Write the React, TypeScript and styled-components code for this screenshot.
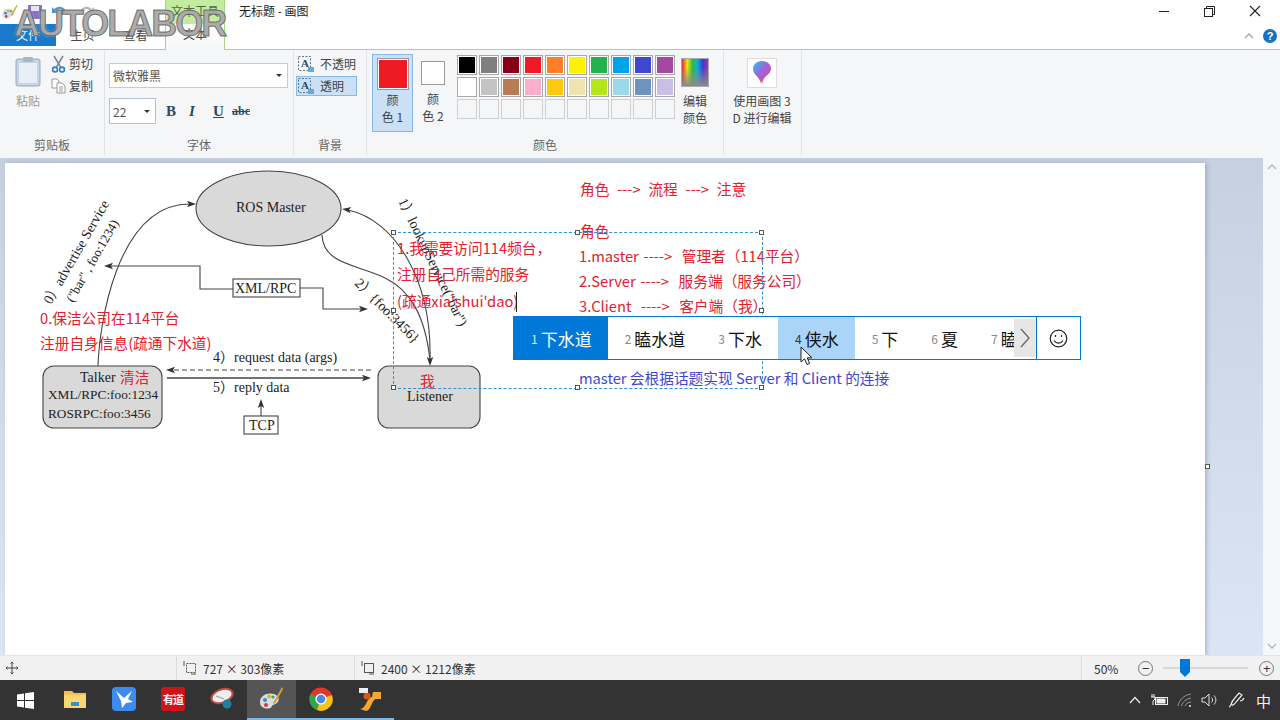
import styled, { createGlobalStyle } from 'styled-components';

const CJK = `'Noto Sans CJK SC', 'Noto Sans', sans-serif`;
const SERIF = `'Liberation Serif', 'Noto Sans CJK SC', serif`;

const GlobalStyle = createGlobalStyle`
  html, body { margin: 0; padding: 0; overflow: hidden; }
  body { font-family: ${CJK}; background: #f5f6f7; }
`;

const Window = styled.div`
  width: 1280px;
  height: 720px;
  display: flex;
  flex-direction: column;
  overflow: hidden;
  position: relative;
`;

/* ---------- title + tabs ---------- */
const TopBar = styled.header`
  height: 50px;
  flex: none;
  background: #fff;
  border-bottom: 1px solid #a6d97f;
  box-sizing: border-box;
  display: flex;
  position: relative;
`;

const TabColumn = styled.div`
  display: flex;
  flex-direction: column;
  justify-content: flex-end;
  height: 50px;
`;

const QuickIcons = styled.div`
  height: 24px;
  display: flex;
  align-items: center;
  gap: 10px;
  padding-left: 1px;
`;

const TabRow = styled.div`
  display: flex;
  height: 26px;
`;

const FileTab = styled.div`
  width: 56px;
  height: 22px;
  background: #1979ca;
  color: #e9f3fb;
  font-size: 12px;
  line-height: 22px;
  text-align: center;
`;

const Tab = styled.div`
  width: 53px;
  height: 22px;
  line-height: 22px;
  font-size: 12px;
  text-align: center;
  color: #444;
`;

const ToolTabs = styled.div`
  width: 60px;
  height: 50px;
  margin-left: 3px;
  flex: none;
  display: flex;
  flex-direction: column;
  border-left: 1px solid #a6d97f;
  border-right: 1px solid #a6d97f;
  box-sizing: border-box;
`;

const ToolTitle = styled.div`
  height: 24px;
  background: #c5eb9e;
  color: #4a6a3a;
  font-size: 12px;
  line-height: 22px;
  text-align: center;
`;

const ToolTab = styled.div`
  height: 26px;
  background: linear-gradient(#ffffff, #f5f6f7);
  margin-bottom: -1px;
  font-size: 12px;
  line-height: 20px;
  text-align: center;
  color: #444;
`;

const WindowTitle = styled.div`
  margin-left: 14px;
  font-size: 12px;
  line-height: 22px;
  color: #222;
`;

const WindowButtons = styled.div`
  margin-left: auto;
  display: flex;
  flex-direction: column;
  align-items: flex-end;
  padding-right: 3px;
`;

const ControlRow = styled.div`
  display: flex;
  align-items: center;
  gap: 34px;
  height: 22px;
  padding-right: 16px;
`;

const HelpRow = styled.div`
  display: flex;
  align-items: center;
  gap: 9px;
  height: 26px;
  margin-top: 1px;
`;

const HelpIcon = styled.div`
  width: 14px;
  height: 14px;
  border-radius: 50%;
  background: #1572c4;
  color: #fff;
  font: bold 11px/14px 'Liberation Sans', sans-serif;
  text-align: center;
`;

const Watermark = styled.div`
  position: absolute;
  left: 14px;
  top: 5px;
  font: bold 36px/38px 'Liberation Sans', sans-serif;
  color: rgba(150, 150, 150, 0.78);
  -webkit-text-stroke: 1px rgba(70, 70, 70, 0.7);
  text-shadow: 0 0 2px rgba(255, 255, 255, 0.9);
  letter-spacing: -2px;
  z-index: 5;
`;

/* ---------- ribbon ---------- */
const Ribbon = styled.section`
  height: 105px;
  flex: none;
  background: #f5f6f7;
  display: flex;
  box-sizing: border-box;
  color: #444;
  font-size: 12px;
`;

const Group = styled.div<{ $w: number }>`
  width: ${p => p.$w}px;
  flex: none;
  box-sizing: border-box;
  border-right: 1px solid #e2e3e4;
  display: flex;
  flex-direction: column;
  height: 105px;
`;

const GroupBody = styled.div`
  flex: 1;
  display: flex;
  min-height: 0;
`;

const GroupLabel = styled.div`
  height: 20px;
  text-align: center;
  font-size: 12px;
  line-height: 20px;
  color: #666;
`;

const PasteButton = styled.div`
  width: 44px;
  margin: 6px 0 0 6px;
  display: flex;
  flex-direction: column;
  align-items: center;
  gap: 5px;
  color: #999;
`;

const SmallStack = styled.div`
  display: flex;
  flex-direction: column;
  gap: 4px;
  margin: 5px 0 0 1px;
`;

const SmallItem = styled.div<{ $active?: boolean }>`
  display: flex;
  align-items: center;
  gap: 3px;
  height: 18px;
  line-height: 18px;
  ${p => p.$active && 'background: #c9e0f7; outline: 1px solid #86b8e8;'}
`;

const BackgroundStack = styled(SmallStack)`
  margin-left: 3px;
`;

const FontColumn = styled.div`
  display: flex;
  flex-direction: column;
  padding: 13px 0 0 4px;
  gap: 10px;
`;

const FontSelect = styled.div`
  width: 179px;
  height: 25px;
  box-sizing: border-box;
  background: #fff;
  border: 1px solid #c4cdd6;
  font-size: 12px;
  line-height: 23px;
  padding: 0 3px;
  color: #555;
  display: flex;
  justify-content: space-between;
  align-items: center;
`;

const Caret = styled.span`
  width: 0;
  height: 0;
  border-left: 3px solid transparent;
  border-right: 3px solid transparent;
  border-top: 3px solid #333;
  margin-right: 2px;
`;

const FontTools = styled.div`
  display: flex;
  align-items: center;
`;

const SizeSelect = styled(FontSelect)`
  width: 47px;
  height: 26px;
  margin-right: 10px;
  border-color: #b8c2cc;
`;

const FormatButton = styled.span<{ $w: number; $style?: string }>`
  width: ${p => p.$w}px;
  font-family: 'Liberation Serif', serif;
  font-size: 15px;
  font-weight: bold;
  color: #2e4a62;
  ${p => p.$style}
`;

const SwatchBig = styled.div`
  width: 41px;
  height: 78px;
  margin: 4px 0 0 5px;
  box-sizing: border-box;
  background: #c9e0f7;
  border: 1px solid #86b8e8;
  display: flex;
  flex-direction: column;
  align-items: center;
  padding-top: 3px;
  line-height: 17px;
  text-align: center;
`;

const SwatchPlain = styled(SwatchBig)`
  width: 30px;
  margin-left: 5px;
  background: transparent;
  border-color: transparent;
  padding-top: 6px;
`;

const ColorChip = styled.div<{ $size: number; $c: string; $mb: number }>`
  width: ${p => p.$size}px;
  height: ${p => p.$size}px;
  flex: none;
  box-sizing: border-box;
  background: ${p => p.$c};
  border: 1px solid #9a9a9a;
  box-shadow: inset 0 0 0 1px #fff;
  margin-bottom: ${p => p.$mb}px;
`;

const Palette = styled.div`
  display: grid;
  grid-template-columns: repeat(10, 20px);
  grid-auto-rows: 20px;
  gap: 2px;
  margin: 5px 0 0 9px;
`;

const PaletteCell = styled.div<{ $c: string | null }>`
  box-sizing: border-box;
  border: 1px solid ${p => (p.$c ? '#a9a9a9' : '#cfcfcf')};
  background: ${p => p.$c ?? 'transparent'};
  box-shadow: ${p => (p.$c ? 'inset 0 0 0 1px #fff' : 'none')};
`;

const BigAction = styled.div<{ $w: number; $ml: number }>`
  width: ${p => p.$w}px;
  margin: 8px 0 0 ${p => p.$ml}px;
  display: flex;
  flex-direction: column;
  align-items: center;
  text-align: center;
  line-height: 17px;
`;

const RainbowIcon = styled.div`
  width: 28px;
  height: 29px;
  box-sizing: border-box;
  border: 1px solid #aaa;
  background:
    linear-gradient(to bottom, transparent 30%, #8a8a8a 100%),
    linear-gradient(to right, #e2262a, #f3e50e, #25c23a, #12a8e0, #3240d0, #b52cb0);
  margin-bottom: 5px;
`;

const Paint3DIcon = styled.div`
  width: 30px;
  height: 30px;
  box-sizing: border-box;
  background: #fff;
  border: 1px solid #ddd;
  display: flex;
  align-items: center;
  justify-content: center;
  margin-bottom: 4px;
`;

/* ---------- workspace ---------- */
const Workspace = styled.main`
  flex: 1;
  display: flex;
  min-height: 0;
  padding-top: 3px;
  background: #f5f6f7;
`;

const CanvasArea = styled.div`
  width: 1263px;
  flex: none;
  background: linear-gradient(#c6d0df, #dbe5f3);
  padding: 5px 0 0 5px;
  box-sizing: border-box;
  position: relative;
  overflow: hidden;
`;

const Sheet = styled.div`
  width: 1200px;
  height: 700px;
  background: #fff;
  position: relative;
  box-shadow: 2px 0 4px rgba(100, 115, 140, 0.35);
`;

const Scrollbar = styled.div`
  flex: 1;
  display: flex;
  flex-direction: column;
  justify-content: space-between;
  align-items: center;
  padding: 6px 0;
`;

const Diagram = styled.svg`
  position: absolute;
  left: 0;
  top: 0;
`;

const Note = styled.div<{ $x: number; $y: number; $c?: string; $ws?: number }>`
  position: absolute;
  left: ${p => p.$x - 5}px;
  top: ${p => p.$y - 163}px;
  font-size: 14.7px;
  line-height: 20px;
  white-space: pre;
  word-spacing: ${p => p.$ws ?? 0}px;
  color: ${p => p.$c ?? '#e0222e'};
`;

const SelectBox = styled.div`
  position: absolute;
  left: 388px;
  top: 69px;
  width: 370px;
  height: 157px;
  border: 1px dashed #2f8fd0;
  box-sizing: border-box;
`;

const Handle = styled.span<{ $x: number; $y: number }>`
  position: absolute;
  left: ${p => p.$x * 100}%;
  top: ${p => p.$y * 100}%;
  width: 5px;
  height: 5px;
  margin: -3px 0 0 -3px;
  background: #fff;
  border: 1px solid #555;
  box-sizing: border-box;
`;

const SheetHandle = styled.span`
  position: absolute;
  left: 1200px;
  top: 301px;
  width: 5px;
  height: 5px;
  background: #fff;
  border: 1px solid #555;
  box-sizing: border-box;
`;

const TextCaret = styled.span`
  position: absolute;
  left: 511px;
  top: 129px;
  width: 1px;
  height: 20px;
  background: #222;
`;

/* ---------- IME candidates ---------- */
const ImeBar = styled.div`
  position: absolute;
  left: 508px;
  top: 153px;
  width: 568px;
  height: 44px;
  box-sizing: border-box;
  background: #fff;
  border: 1px solid #0078d7;
  display: flex;
  z-index: 3;
`;

const Candidates = styled.div`
  width: 522px;
  flex: none;
  display: flex;
  overflow: hidden;
  position: relative;
`;

const Candidate = styled.div<{ $state?: 'selected' | 'hover' }>`
  flex: none;
  display: flex;
  align-items: center;
  gap: 3px;
  height: 100%;
  padding: 0 16px 0 17px;
  box-sizing: border-box;
  font-size: 17px;
  color: ${p => (p.$state === 'selected' ? '#fff' : '#111')};
  background: ${p =>
    p.$state === 'selected' ? '#0078d7' : p.$state === 'hover' ? '#abd5f8' : 'transparent'};
`;

const CandidateNum = styled.span<{ $state?: 'selected' | 'hover' }>`
  font-size: 12px;
  color: ${p => (p.$state === 'selected' ? '#d7ebfa' : p.$state === 'hover' ? '#333' : '#888')};
`;

const NextPage = styled.div`
  position: absolute;
  right: 0;
  top: 2px;
  width: 22px;
  height: 38px;
  background: #e6e6e6;
  display: flex;
  align-items: center;
  justify-content: center;
`;

const Emoji = styled.div`
  flex: 1;
  border-left: 1px solid #0078d7;
  display: flex;
  align-items: center;
  justify-content: center;
`;

const Pointer = styled.svg`
  position: absolute;
  left: 795px;
  top: 183px;
  z-index: 6;
`;

/* ---------- status + taskbar ---------- */
const StatusBar = styled.footer`
  height: 25px;
  flex: none;
  background: #f1f1f1;
  border-top: 1px solid #e3e3e3;
  box-sizing: border-box;
  display: flex;
  align-items: center;
  font-size: 12px;
  color: #333;
`;

const StatusCell = styled.div<{ $w: number }>`
  width: ${p => p.$w}px;
  height: 100%;
  flex: none;
  box-sizing: border-box;
  border-right: 1px solid #dcdcdc;
  display: flex;
  align-items: center;
  gap: 6px;
  padding-left: 6px;
`;

const ZoomCluster = styled.div`
  display: flex;
  align-items: center;
  margin-left: 12px;
`;

const ZoomPercent = styled.span`
  margin-right: 20px;
`;

const ZoomButton = styled.div`
  width: 15px;
  height: 15px;
  border: 1px solid #777;
  border-radius: 50%;
  box-sizing: border-box;
  display: flex;
  align-items: center;
  justify-content: center;
  font: 13px/13px 'Liberation Sans', sans-serif;
  color: #333;
`;

const ZoomTrack = styled.div`
  width: 85px;
  height: 2px;
  background: #d8d8d8;
  margin: 0 11px 0 10px;
  position: relative;
`;

const ZoomThumb = styled.svg`
  position: absolute;
  left: 16px;
  top: -8px;
`;

const Taskbar = styled.nav`
  height: 40px;
  flex: none;
  background: #333333;
  display: flex;
  align-items: stretch;
`;

const TaskStart = styled.div`
  width: 50px;
  display: flex;
  align-items: center;
  justify-content: center;
`;

const TaskItem = styled.div<{ $active?: boolean; $open?: boolean }>`
  width: 49.2px;
  flex: none;
  display: flex;
  align-items: center;
  justify-content: center;
  box-sizing: border-box;
  background: ${p => (p.$active ? '#555' : 'transparent')};
  border-bottom: 2px solid ${p => (p.$open ? '#76b9ed' : 'transparent')};
`;

const YoudaoTile = styled.div`
  width: 24px;
  height: 24px;
  border-radius: 3px;
  background: #d0121b;
  color: #fff;
  font-size: 11px;
  font-weight: bold;
  line-height: 24px;
  text-align: center;
  letter-spacing: -1px;
`;

const Tray = styled.div`
  margin-left: auto;
  display: flex;
  align-items: center;
  gap: 9px;
  padding-right: 9px;
  color: #f2f2f2;
`;

const PenIcon = styled.svg`
  margin-left: 1px;
`;

const ImeLabel = styled.span`
  font-size: 15px;
  margin-left: 1px;
`;

const palette: (string | null)[] = [
  '#000000', '#7f7f7f', '#880015', '#ed1c24', '#ff7f27', '#fff200', '#22b14c', '#00a2e8', '#3f48cc', '#a349a4',
  '#ffffff', '#c3c3c3', '#b97a57', '#ffaec9', '#ffc90e', '#efe4b0', '#b5e61d', '#99d9ea', '#7092be', '#c8bfe7',
  null, null, null, null, null, null, null, null, null, null,
];

const candidates = ['下水道', '瞌水道', '下水', '侠水', '下', '夏', '瞌睡'];

const handles: [number, number][] = [
  [0, 0], [0.5, 0], [1, 0], [0, 0.5], [1, 0.5], [0, 1], [0.5, 1], [1, 1],
];

function WinLogo() {
  return (
    <svg width="17" height="17" viewBox="0 0 17 17" fill="#fff">
      <path d="M0 2.4 7 1.4V8H0zM8 1.3 17 0V8H8zM0 9H7V15.6L0 14.6zM8 9H17V17L8 15.7z" />
    </svg>
  );
}

function PaintPalette({ size }: { size: number }) {
  return (
    <svg width={size} height={size} viewBox="0 0 26 26">
      <path d="M2 16C2 9 10 6 16 8c5 2 6 6 3 9-2 2-4 1-5 3-1 3-5 3-8 2-3-1-4-3-4-6z" fill="#d8dde0" />
      <circle cx="7" cy="14" r="2" fill="#2e8bd6" />
      <circle cx="11" cy="10.5" r="2" fill="#e4b21e" />
      <circle cx="8" cy="19" r="2" fill="#d63a3a" />
      <circle cx="15" cy="11" r="1.6" fill="#3aa655" />
      <path d="M24 1 15 17l2 1L25 3z" fill="#d4a23a" />
    </svg>
  );
}

function Arrow({ x, y, angle }: { x: number; y: number; angle: number }) {
  return <path d="M0 0-9-3.2-7 0-9 3.2z" fill="#333" transform={`translate(${x} ${y}) rotate(${angle})`} />;
}

function RosDiagram() {
  const label = { fontFamily: SERIF, fontSize: 14, fill: '#222' };
  return (
    <Diagram width="600" height="300" viewBox="5 163 600 300">
      <g fill="none" stroke="#444" strokeWidth="1.1">
        <ellipse cx="268.5" cy="208.5" rx="72.5" ry="37.5" fill="#d9d9d9" />
        <rect x="43" y="366" width="119" height="62" rx="11" fill="#d9d9d9" />
        <rect x="378" y="366" width="102" height="62" rx="11" fill="#d9d9d9" />
        <rect x="233" y="279" width="67" height="18" fill="#fff" />
        <rect x="244" y="416" width="34" height="18" fill="#fff" />
        <path d="M98 366C99 330 115 204 190 204" />
        <path d="M348 210C395 220 432 280 430 360" />
        <path d="M322 235C323 265 360 265 385 278 410 290 425 315 430 360" />
        <path d="M233 289H200V266H110" />
        <path d="M300 288H323V309H362" />
        <path d="M371 370H172" strokeDasharray="5 3" />
        <path d="M167 378H365" strokeWidth="1.4" />
        <path d="M261 416V404" />
      </g>
      <Arrow x={196} y={204} angle={0} />
      <Arrow x={342} y={209} angle={187} />
      <Arrow x={430} y={366} angle={90} />
      <Arrow x={104} y={266} angle={180} />
      <Arrow x={368} y={309} angle={0} />
      <Arrow x={166} y={370} angle={180} />
      <Arrow x={371} y={378} angle={0} />
      <Arrow x={261} y={399} angle={-90} />
      <text {...label} x="236" y="212">ROS Master</text>
      <text {...label} x="235" y="293">XML/RPC</text>
      <text {...label} x="80" y="382">Talker</text>
      <text {...label} fontSize="13.3" x="48" y="399">XML/RPC:foo:1234</text>
      <text {...label} fontSize="13.3" x="48" y="418">ROSRPC:foo:3456</text>
      <text {...label} x="407" y="401">Listener</text>
      <text {...label} x="249" y="430">TCP</text>
      <text {...label} x="213" y="362">4）request data (args)</text>
      <text {...label} x="213" y="392">5）reply data</text>
      <text {...label} transform="translate(51 305) rotate(-60)">0）advertise Service</text>
      <text {...label} fontSize="13" transform="translate(73 303) rotate(-60)">("bar" , foo:1234)</text>
      <text {...label} transform="translate(398 201) rotate(64)">1）lookupService("bar")</text>
      <text {...label} transform="translate(354 284) rotate(45)">2）{'{foo:3456}'}</text>
    </Diagram>
  );
}

export default function App() {
  return (
    <Window>
      <GlobalStyle />
      <Watermark>AUTOLABOR</Watermark>

      <TopBar>
        <TabColumn>
          <QuickIcons>
            <PaintPalette size={17} />
            <svg width="14" height="14" viewBox="0 0 14 14"><rect width="14" height="14" rx="1" fill="#8a6fc4" /><rect x="3" y="1" width="8" height="5" fill="#e6e0f4" /></svg>
            <svg width="16" height="12" viewBox="0 0 16 12" fill="none"><path d="M2 5C6 0 12 1 14 8" stroke="#4a95d4" strokeWidth="2.2" /><path d="M0 1V7H6z" fill="#4a95d4" /></svg>
            <svg width="16" height="12" viewBox="0 0 16 12" fill="none"><path d="M14 5C10 0 4 1 2 8" stroke="#b5b5b5" strokeWidth="2.2" /><path d="M16 1V7H10z" fill="#b5b5b5" /></svg>
          </QuickIcons>
          <TabRow>
            <FileTab>文件</FileTab>
            <Tab>主页</Tab>
            <Tab>查看</Tab>
          </TabRow>
        </TabColumn>
        <ToolTabs>
          <ToolTitle>文本工具</ToolTitle>
          <ToolTab>文本</ToolTab>
        </ToolTabs>
        <WindowTitle>无标题 - 画图</WindowTitle>
        <WindowButtons>
          <ControlRow>
            <svg width="11" height="11" viewBox="0 0 11 11"><path d="M0 5.5H10" stroke="#222" /></svg>
            <svg width="11" height="11" viewBox="0 0 11 11" fill="none" stroke="#222">
              <rect x="0.5" y="2.5" width="8" height="8" />
              <path d="M2.5 2.5V.5H10.5V8.5H8.5" />
            </svg>
            <svg width="12" height="12" viewBox="0 0 12 12"><path d="M1 1 11 11M11 1 1 11" stroke="#222" strokeWidth="1.1" /></svg>
          </ControlRow>
          <HelpRow>
            <svg width="10" height="6" viewBox="0 0 10 6" fill="none"><path d="M1 5 5 1 9 5" stroke="#aaa" strokeWidth="1.5" /></svg>
            <HelpIcon>?</HelpIcon>
          </HelpRow>
        </WindowButtons>
      </TopBar>

      <Ribbon>
        <Group $w={105}>
          <GroupBody>
            <PasteButton>
              <svg width="26" height="31" viewBox="0 0 26 31">
                <rect x="1" y="3" width="24" height="27" rx="2" fill="#c5d3e2" stroke="#9aa9b8" />
                <rect x="4" y="7" width="18" height="20" fill="#e8eef5" />
                <rect x="8" y="1" width="10" height="5" rx="1" fill="#a9b5c0" />
              </svg>
              粘贴
            </PasteButton>
            <SmallStack>
              <SmallItem>
                <svg width="15" height="18" viewBox="0 0 15 18" fill="none">
                  <path d="M3 1 9.5 12M12 1 5.5 12" stroke="#7c8794" strokeWidth="1.5" />
                  <circle cx="4" cy="14.5" r="2.4" stroke="#2c7fc9" strokeWidth="1.6" />
                  <circle cx="11" cy="14.5" r="2.4" stroke="#2c7fc9" strokeWidth="1.6" />
                </svg>
                剪切
              </SmallItem>
              <SmallItem>
                <svg width="15" height="16" viewBox="0 0 15 16" fill="#fff" stroke="#9a9a9a">
                  <path d="M1 1H6L8 3V10H1z" />
                  <path d="M6 5H11L14 8V15H6z" />
                  <path d="M8 9H12M8 11H12M8 13H12" />
                </svg>
                复制
              </SmallItem>
            </SmallStack>
          </GroupBody>
          <GroupLabel>剪贴板</GroupLabel>
        </Group>

        <Group $w={189}>
          <GroupBody>
            <FontColumn>
              <FontSelect>微软雅黑<Caret /></FontSelect>
              <FontTools>
                <SizeSelect>22<Caret /></SizeSelect>
                <FormatButton $w={23}>B</FormatButton>
                <FormatButton $w={24} $style="font-style: italic;">I</FormatButton>
                <FormatButton $w={19} $style="text-decoration: underline;">U</FormatButton>
                <FormatButton $w={20} $style="text-decoration: line-through; font-size: 12px;">abc</FormatButton>
              </FontTools>
            </FontColumn>
          </GroupBody>
          <GroupLabel>字体</GroupLabel>
        </Group>

        <Group $w={73}>
          <GroupBody>
            <BackgroundStack>
              <SmallItem>
                <svg width="20" height="17" viewBox="0 0 20 17">
                  <rect x="1.500" y="0.5" width="12" height="14" fill="none" stroke="#5a7690" strokeDasharray="2 1.5" />
                  <text x="4" y="11" fontFamily="Liberation Serif, serif" fontSize="11" fontWeight="bold" fill="#2e4a62">A</text>
                  <rect x="11" y="11" width="6" height="5" fill="#62a8e5" />
                </svg>
                不透明
              </SmallItem>
              <SmallItem $active>
                <svg width="20" height="17" viewBox="0 0 20 17">
                  <rect x="1.5" y="0.5" width="12" height="14" fill="none" stroke="#5a7690" strokeDasharray="2 1.5" />
                  <text x="4" y="11" fontFamily="Liberation Serif, serif" fontSize="11" fontWeight="bold" fill="#2e4a62">A</text>
                  <rect x="11" y="11" width="6" height="5" fill="#62a8e5" />
                </svg>
                透明
              </SmallItem>
            </BackgroundStack>
          </GroupBody>
          <GroupLabel>背景</GroupLabel>
        </Group>

        <Group $w={357}>
          <GroupBody>
            <SwatchBig>
              <ColorChip $size={32} $c="#ed1c24" $mb={1} />
              颜<br />色 1
            </SwatchBig>
            <SwatchPlain>
              <ColorChip $size={24} $c="#ffffff" $mb={5} />
              颜<br />色 2
            </SwatchPlain>
            <Palette>
              {palette.map((c, i) => <PaletteCell key={i} $c={c} />)}
            </Palette>
            <BigAction $w={34} $ml={3}>
              <RainbowIcon />
              编辑<br />颜色
            </BigAction>
          </GroupBody>
          <GroupLabel>颜色</GroupLabel>
        </Group>

        <Group $w={78}>
          <GroupBody>
            <BigAction $w={66} $ml={5}>
              <Paint3DIcon>
                <svg width="20" height="26" viewBox="0 0 20 26">
                  <defs>
                    <linearGradient id="drop" x1="0" y1="0" x2="1" y2="1">
                      <stop offset="0" stopColor="#27c4e6" />
                      <stop offset="0.5" stopColor="#a65ee0" />
                      <stop offset="1" stopColor="#f0486a" />
                    </linearGradient>
                  </defs>
                  <path d="M10 1C4 1 1 5 1 9c0 5 5 7 7 12 1 3 3 3 3 0 1-5 8-7 8-12 0-4-3-8-9-8z" fill="url(#drop)" />
                  <path d="M8 21c1 3 3 3 3 0z" fill="#f2b21c" />
                </svg>
              </Paint3DIcon>
              使用画图 3<br />D 进行编辑
            </BigAction>
          </GroupBody>
        </Group>
      </Ribbon>

      <Workspace>
        <CanvasArea>
          <Sheet>
            <RosDiagram />
            <Note $x={40} $y={308}>0.保洁公司在114平台</Note>
            <Note $x={40} $y={333}>注册自身信息(疏通下水道)</Note>
            <Note $x={120} $y={367}>清洁</Note>
            <Note $x={420} $y={371}>我</Note>
            <Note $x={397} $y={238}>1.我需要访问114频台，</Note>
            <Note $x={397} $y={264}>注册自己所需的服务</Note>
            <Note $x={397} $y={291}>(疏通xia'shui'dao)</Note>
            <TextCaret />
            <Note $x={580} $y={179} $ws={4.5}>角色 ---&gt; 流程 ---&gt; 注意</Note>
            <Note $x={580} $y={221}>角色</Note>
            <Note $x={579} $y={246} $ws={1.5}>1.master ----&gt;  管理者（114平台）</Note>
            <Note $x={579} $y={271} $ws={1.5}>2.Server ----&gt;  服务端（服务公司）</Note>
            <Note $x={579} $y={296} $ws={1.5}>3.Client  ----&gt;  客户端（我）</Note>
            <Note $x={579} $y={368} $c="#3f48cc">master 会根据话题实现 Server 和 Client 的连接</Note>
            <SelectBox>
              {handles.map(([x, y]) => <Handle key={`${x}-${y}`} $x={x} $y={y} />)}
            </SelectBox>
            <SheetHandle />
            <ImeBar>
              <Candidates>
                {candidates.map((word, i) => {
                  const state = i === 0 ? 'selected' : i === 3 ? 'hover' : undefined;
                  return (
                    <Candidate key={word} $state={state}>
                      <CandidateNum $state={state}>{i + 1}</CandidateNum>
                      {word}
                    </Candidate>
                  );
                })}
                <NextPage>
                  <svg width="12" height="20" viewBox="0 0 12 20" fill="none">
                    <path d="M2 1 10 10 2 19" stroke="#666" strokeWidth="1.3" />
                  </svg>
                </NextPage>
              </Candidates>
              <Emoji>
                <svg width="19" height="19" viewBox="0 0 19 19" fill="none" stroke="#222" strokeWidth="1.2">
                  <circle cx="9.5" cy="9.5" r="8.3" />
                  <path d="M5 11.5c2 3.4 7 3.4 9 0" />
                  <path d="M6.5 6V8M12.5 6V8" />
                </svg>
              </Emoji>
            </ImeBar>
            <Pointer width="13" height="20" viewBox="0 0 13 20">
              <path d="M1 1V16L4.6 12.8 7 18.5 9.6 17.4 7.2 11.8H12z" fill="#fff" stroke="#222" />
            </Pointer>
          </Sheet>
        </CanvasArea>
        <Scrollbar>
          <svg width="10" height="6" viewBox="0 0 10 6" fill="none"><path d="M1 5 5 1 9 5" stroke="#bbb" strokeWidth="1.5" /></svg>
          <svg width="10" height="6" viewBox="0 0 10 6" fill="none"><path d="M1 1 5 5 9 1" stroke="#bbb" strokeWidth="1.5" /></svg>
        </Scrollbar>
      </Workspace>

      <StatusBar>
        <StatusCell $w={177}>
          <svg width="12" height="12" viewBox="0 0 12 12" fill="none" stroke="#444">
            <path d="M6 0V12M0 6H12M4.5 1.5 6 0 7.5 1.5M4.5 10.5 6 12 7.5 10.5M1.5 4.5 0 6 1.5 7.5M10.5 4.5 12 6 10.5 7.5" />
          </svg>
        </StatusCell>
        <StatusCell $w={178}>
          <svg width="14" height="14" viewBox="0 0 14 14" fill="none" stroke="#555">
            <rect x="3.5" y="2.5" width="9" height="9" strokeDasharray="2 1" />
            <path d="M1 0V5M8 13H13" />
          </svg>
          727 × 303像素
        </StatusCell>
        <StatusCell $w={727}>
          <svg width="14" height="14" viewBox="0 0 14 14" fill="none" stroke="#555">
            <rect x="3.5" y="2.5" width="9" height="9" />
            <path d="M1 0V5M8 13H13" />
          </svg>
          2400 × 1212像素
        </StatusCell>
        <ZoomCluster>
          <ZoomPercent>50%</ZoomPercent>
          <ZoomButton>−</ZoomButton>
          <ZoomTrack>
            <ZoomThumb width="12" height="18" viewBox="0 0 12 18">
              <path d="M1 0H11V13L6 18 1 13z" fill="#0078d7" />
            </ZoomThumb>
          </ZoomTrack>
          <ZoomButton>+</ZoomButton>
        </ZoomCluster>
      </StatusBar>

      <Taskbar>
        <TaskStart><WinLogo /></TaskStart>
        <TaskItem>
          <svg width="22" height="20" viewBox="0 0 22 20">
            <path d="M0 2H8L10 4H22V19H0z" fill="#f3c14b" />
            <rect x="0" y="6" width="22" height="13" fill="#f7d774" />
            <rect x="7" y="13" width="8" height="4" fill="#2f8fd8" />
          </svg>
        </TaskItem>
        <TaskItem>
          <svg width="24" height="24" viewBox="0 0 24 24">
            <rect width="24" height="24" rx="4" fill="#3d8bef" />
            <path d="M4 4 12 11 20 4 16 12 21 15 14 16 10 21 9 14z" fill="#fff" />
          </svg>
        </TaskItem>
        <TaskItem><YoudaoTile>有道</YoudaoTile></TaskItem>
        <TaskItem>
          <svg width="26" height="24" viewBox="0 0 26 24">
            <ellipse cx="13" cy="9" rx="11" ry="6.5" fill="#eee" stroke="#c0484c" strokeWidth="2" transform="rotate(-20 13 9)" />
            <path d="M7 9 15 12" stroke="#999" />
            <circle cx="18" cy="17" r="4.5" fill="#1f7f9e" />
          </svg>
        </TaskItem>
        <TaskItem $active $open><PaintPalette size={26} /></TaskItem>
        <TaskItem $open>
          <svg width="24" height="24" viewBox="0 0 24 24">
            <circle cx="12" cy="12" r="11.5" fill="#e0382e" />
            <path d="M12 12 1.7 7A11.5 11.5 0 0 0 8 23z" fill="#2ea64a" />
            <path d="M12 12 22.8 8A11.5 11.5 0 0 1 8 23z" fill="#f4c21a" />
            <circle cx="12" cy="12" r="5.6" fill="#fff" />
            <circle cx="12" cy="12" r="4.3" fill="#4a89e8" />
          </svg>
        </TaskItem>
        <TaskItem $open>
          <svg width="24" height="24" viewBox="0 0 24 24">
            <path d="M2 22C8 22 9 10 14 10L15 5H23V12H18C14 12 13 24 8 24z" fill="#f0a830" />
            <circle cx="9" cy="9" r="3.5" fill="#d9541e" />
            <rect x="1" y="1" width="9" height="5" fill="#eee" />
          </svg>
        </TaskItem>
        <Tray>
          <svg width="12" height="8" viewBox="0 0 12 8" fill="none"><path d="M1 7 6 1.5 11 7" stroke="#eee" strokeWidth="1.2" /></svg>
          <svg width="18" height="12" viewBox="0 0 18 12" fill="none" stroke="#eee">
            <rect x="5.5" y="3.5" width="12" height="7" />
            <rect x="7" y="5" width="8" height="4" fill="#eee" />
            <path d="M2 0V3M4 0V3M1 3H5V5L3 7V11" />
          </svg>
          <svg width="15" height="14" viewBox="0 0 15 14" fill="none" stroke="#999">
            <path d="M1 13C2 7 7 2 14 1M4.500 13C5.500 9 9 6 14 5M8 13C8.500 11 11 9 14 9" />
            <circle cx="13" cy="13" r="1" fill="#eee" stroke="none" />
          </svg>
          <svg width="17" height="14" viewBox="0 0 17 14" fill="none" stroke="#ddd">
            <path d="M1 5H4L8 1V13L4 9H1z" />
            <path d="M10.500 4.500C12 6 12 8 10.500 9.500M13 2.500C15.500 5 15.500 9 13 11.500" />
          </svg>
          <PenIcon width="18" height="17" viewBox="0 0 18 17" fill="none" stroke="#eee" strokeWidth="1.2">
            <path d="M1 15C3 15 3 10 6 7L11 1 14 3 8 10C6 13 4 14 3 12" />
            <path d="M12 9C14 9 15 8 16 6" />
          </PenIcon>
          <ImeLabel>中</ImeLabel>
        </Tray>
      </Taskbar>
    </Window>
  );
}
